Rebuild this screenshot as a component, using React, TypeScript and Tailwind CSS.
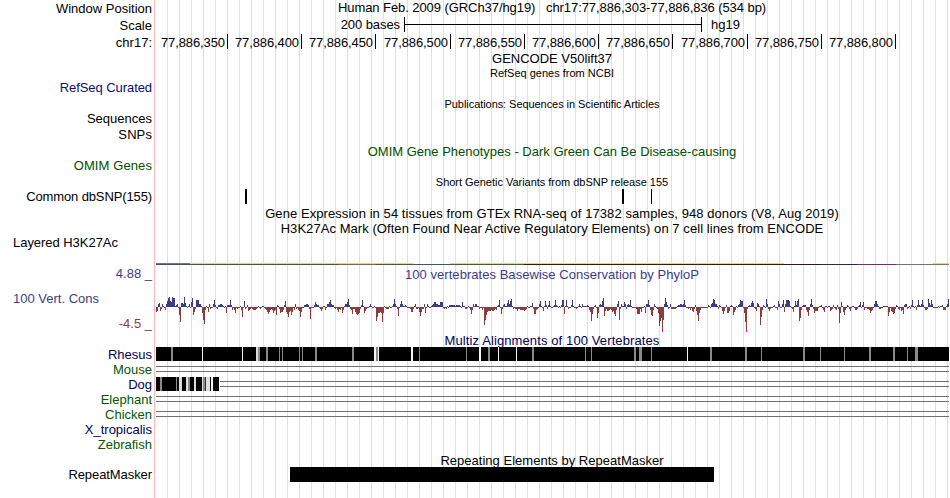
import React from "react";

type Run = [number, ...number[]];

// Runs of signed conservation scores: first value is the start column, the rest are scores.
const blockA: Run[] = [
  [6, -5, -4, 3, 4, -4, -2, 3, 1, -1, -3, 3, 6, 9, 10, 6, 5, 10, 9, 9, 1, 2, 3, -1, -8, -15, 4, 4, 3, 10, 4, 1, -1, 1, 3, -1, 5, 9, -8, -5, -2, 7, 7, 7, 3, 3, 1, -6, -13, -17, -3, 1, -1, -5, 3, -2, -1, -1, 3, 7, 2, -1, -2, 2, 2, 3, 3, 2, 1, -1, 1, -6, 2, 2, 2, 7, 2, -3, -1, -3, -6, -1, -2, -1, -1, 1, -3, -10, -1, 6, -2, -1, 2, -4, -3, -2, -1, -2, -3, -3, -3, -2, -1, 1, -1, -2, -1, 1, 1, -1, -2, -3, -5, -7, -5, -3, -2, -3, -6, -4, -3, -8, 2, 1, -2, -6, -5, -5, -3, 2, 6, -5, -7, -10, -5, -4, -8, -5, -1, -3, 3, -2, -1, -3, -4, -10, -5, -1, -1, 2, 2, 3, 3, 2, -2, -12, -1],
  [164, 2, 5, 3, 2, 2, -1, -2, -4, -2, 1, 1, -3, -1, 3, 3, 5, 7, 3, 2, 2, -1, -2, -1, -3, -5, -2, -3, -1, -6, -3, 1, 3, 3, 5, 8, 2],
];
const blockB: Run[] = [
  [0, -2, -3, -7, -2, -2, -5, -7, -8, -7, -6, -2, 2, 7, 1, -6, -4, -2, -1, -1, 1, 3, 1, -1, -1, 1, -1, -14, -10, -6, -6, -5, -6, -15, -6, 1, -1, -2, -2, -2, 1, -1, -1, 1, 3, 8, 3, 1, -2, -9, -1, 3, 6, 3, 1, 1, 2, 1, -1, -1, -1, -2, -5, -5, -2, 1, 3, -2, -2, -1, -5, -9, -5, -2, -2, 3, -6, -1, 3, 1, -1, -1, 1, 2, 3, 5, 5, 3, 3, 2, 2, 5, 5, 5, -1, -2, -1, -2, 1, -1, 2, 2, 2, 2, 2, 2, 1, 2, 2, 2, 2, 1, -1, 5, 1, 1, -2, -2, -1, 1, -1, -3, -7, -3, 3, 1, 3, 3, 1, 1, -2, -1, -1, -3],
  [134, -18, -13, -8, -5, -4, -4, -4, -3, -4, -4, -3, -2, -3, 1, 2, 7, -1, -7, -2, 2, 3, 1, 1, 4, 7, 3, 6, 8, 1, -2, -1, -2, -2, -4, -2, -2, -3, -3, -3, -3, -4, -3, -2, 1, -1, -1, 1, 1, 4, -2, -7, -7, -3, -2, -1, 3, 6, 1, -1, -4, 1, 6, 2, -2, 2, 6],
];
const blockC: Run[] = [
  [0, 1, -1, -1, 1, 2, 7, 2, 1, -1, 1, -1, 2, 7, 7, -7, 1, 7, 1, -2, -1, -1, 2, 7, 1, -1, -1, -2, -1, 1, 3, 1, -1, 3, 1, 1, 1, 1, 2, 1, -3, -5, -14, -7, -2, 1, 2, -1, -11, -6, 2, 3, 2, 6, 9, -9, -4, -2, -4, -4, -3, -2, -3, -5, -4, -7, -9, -3, 3, 6, -13, -2, 3, 1, 1, 5, 3, -2, 2, 3, 2, 7, 1, -1, -1, -1, -1, -2, -7, -7, -7, -2, -5, -1, -1, 1, -6, 3, 3, 7, 2, -3, -8, -9, -3, 3, 1, -1, -2, -6, -19, -14, -11, -24, -13, 3, 9, 5, 2, -2, -1, 3, -2, -2, -2, -2, -2, -1, 1, 2, 2, 3, 3, 2, 3, 7, 2, -1, -1, -2, -1, -3, -1, -4, -5, -2, 2, -4, -8, -14, -6, -3, -1],
  [158, 2, 1, -1, 3, 4, 8, 7, 3, 3, 1, -2, 2, 1, -1, -4, -7, -4, -1, 2, -6, -6, -4, 1, 2, 1, -8, -5, -3, 1, -1, 2, 3, 7, 6, 6],
  [194, -6, -15, -24, -2, 1, 2],
];
const blockD: Run[] = [
  [0, 1, 4, 6, 4, -1, -2, -4, 4, 3, 1, -18, -10, -3, 2, 1, -1, 8, 3, -2, -4, -2, -1, -1, 1, 2, -1, -1, -3, 6, 3, -1, -1, 3, 7, -5, 3, 7, 7, 7, 6, 1, -1, -2, -5, 1, 6, 2, 6, 8, -14, -11, -3, 1, 2, 2, 2, -3, -5, -9, -3, 3, 8, 2, -2, -6, -4, -4, -4, -1, 1, 1, 2, -1, -3, -5, 1, 1, -1, 1, 1, -4, -3, -2, 2, -1, -2, -3, 2, -2, -16, -6, 5, 1, -5, -8, -3, -1, 2, 1, -2, -4, -1, 1, 1, -1, -3, -3, -2, 1, 2, 5, -1, 2, 5, -3, -1, -1, -2, -2, -3, -6, -4, -3, -1, 3, 6, 6, 3, 1, -2, -2, -1, -1, 1, 1, 1, 1, 1, -9, -5, -1, -4, -5, -7, -6, -2, 2, 1, -2, -3, -1, -4, -3, -7, 2, 3, 3, -2, -1, 1, -2, 2, 7, 1, -1, 1, -3, 2, 7, 2, 1, 3, 7, 2, -1, -3, -3, -2, 8, 4, 2, 7, 3, -1],
  [188, 1, -1, 1, 1, 2, -3, -3, -3, 1, 3, 8],
];

const scores: number[] = new Array(793).fill(-1);
[blockA, blockB, blockC, blockD].forEach((runs, b) =>
  runs.forEach(([start, ...values]) =>
    values.forEach((v, i) => {
      const col = b * 200 + start + i - 6;
      if (col < 793) scores[col] = v;
    }),
  ),
);

function bars(positive: boolean) {
  return scores
    .map((v, x) => {
      if (v > 0 !== positive) return "";
      return v > 0 ? `M${x} ${17 - v}h1v${v}h-1z` : `M${x} 17h1v${-v}h-1z`;
    })
    .join("");
}

function Conservation() {
  return (
    <svg className="ml-px mt-2 block shrink-0" width="793" height="43" shapeRendering="crispEdges">
      <path d={bars(true)} fill="#3c3c8c" />
      <path d={bars(false)} fill="#8c3c3c" />
      <path d="M506 40h1v2h-1zM590 40h1v2h-1z" fill="#ff00ff" />
    </svg>
  );
}

type Gap = [number, number, string];
const G = "#8a8a8a";
const W = "#f4f4f4";
const L = "#dedede";

const rhesus: Gap[] = [
  [171, 2, G], [202, 1, W], [242, 1, W], [256, 2, L], [258, 2, G], [266, 2, G], [279, 1, G], [282, 1, G],
  [299, 1, G], [302, 1, G], [315, 2, G], [352, 2, G], [374, 2, W], [376, 2, G], [378, 1, W], [411, 2, W],
  [419, 1, G], [466, 1, G], [479, 2, W], [488, 2, G], [498, 1, W], [516, 1, W], [532, 2, G], [585, 1, G],
  [591, 1, G], [634, 2, G], [639, 3, G], [651, 1, G], [687, 1, W], [710, 2, G], [745, 2, G], [761, 1, G],
  [803, 2, G], [820, 1, G], [844, 1, G], [869, 2, G], [893, 2, G], [907, 1, G], [915, 3, G],
];
const dog: Gap[] = [
  [160, 2, G], [176, 1, G], [179, 3, L], [186, 2, L], [188, 2, G], [194, 2, L], [202, 1, L], [203, 2, G],
  [205, 1, "#333333"], [206, 4, L], [211, 2, W],
];

function Alignment({ gaps, width }: { gaps: Gap[]; width: number }) {
  return (
    <svg className="block shrink-0" width={width} height="14" shapeRendering="crispEdges">
      <rect width={width} height="14" fill="#000" />
      {gaps.map(([x, w, c]) => (
        <rect key={x} x={x - 156} width={w} height="14" fill={c} />
      ))}
    </svg>
  );
}

const Unaligned = () => <div className="h-1.5 flex-1 border-y border-[#707070]" />;

const labels: [string, string][] = [
  ["Window Position", "mt-px"],
  ["Scale", "mt-0.5"],
  ["chr17:", "mt-0.5"],
  ["RefSeq Curated", "mt-[30px] text-[#0c0c78] tracking-[-0.07px]"],
  ["Sequences", "mt-4"],
  ["SNPs", "mt-px tracking-[0.1px]"],
  ["OMIM Genes", "mt-4 text-[#005000] tracking-[0.1px]"],
  ["Common dbSNP(155)", "mt-4 tracking-[-0.12px]"],
  ["Layered H3K27Ac", "mt-[31px] self-start pl-[13px] tracking-[-0.04px]"],
  ["4.88 _", "mt-4 text-[#3c3c8c]"],
  ["100 Vert. Cons", "mt-2.5 self-start pl-[13px] text-[#3c3c8c]"],
  ["-4.5 _", "mt-2.5 text-[#8c3c3c]"],
  ["Rhesus", "mt-4 text-[#00005a]"],
  ["Mouse", "text-[#005a00]"],
  ["Dog", "text-[#00005a]"],
  ["Elephant", "text-[#005a00]"],
  ["Chicken", "text-[#005a00]"],
  ["X_tropicalis", "text-[#00005a]"],
  ["Zebrafish", "text-[#005a00]"],
  ["RepeatMasker", "mt-[15px] tracking-[-0.08px]"],
];

const ruler: [string, string][] = [
  ["77,886,350", "w-[73px]"],
  ["77,886,400", "w-[74px]"],
  ["77,886,450", "w-[74px]"],
  ["77,886,500", "w-[75px]"],
  ["77,886,550", "w-[74px]"],
  ["77,886,600", "w-[74px]"],
  ["77,886,650", "w-[74px]"],
  ["77,886,700", "w-[75px]"],
  ["77,886,750", "w-[74px]"],
  ["77,886,800", "w-[74px]"],
];

function Title({ className = "", children }: { className?: string; children: React.ReactNode }) {
  return <div className={`h-[15px] shrink-0 whitespace-pre text-center ${className}`}>{children}</div>;
}

export default function App() {
  return (
    <div className="flex h-[498px] w-[950px] overflow-hidden bg-white font-['Liberation_Sans',Arial,sans-serif] text-[13px] leading-[15px] text-black">
      <aside className="flex w-[154px] shrink-0 flex-col items-end whitespace-pre">
        {labels.map(([text, cls]) => (
          <div key={text} className={`h-[15px] shrink-0 pr-0.5 ${cls}`}>
            {text}
          </div>
        ))}
      </aside>
      <div className="w-px shrink-0 bg-[#ffb4b4]" />
      <main className="flex w-[794px] shrink-0 flex-col bg-[linear-gradient(to_right,#fff_1px,transparent_1px),repeating-linear-gradient(to_right,#dcdcf5_0px,#dcdcf5_1px,transparent_1px,transparent_12px)]">
        <Title className="tracking-[-0.07px]">Human Feb. 2009 (GRCh37/hg19)   chr17:77,886,303-77,886,836 (534 bp)</Title>
        <div className="mt-0.5 flex h-[17px] shrink-0">
          <div className="w-[249px] pr-1 text-right tracking-[-0.08px]">200 bases</div>
          <div className="flex h-[15px] w-[298px] items-center border-x border-black">
            <div className="h-px w-full bg-black" />
          </div>
          <div className="pl-[9px]">hg19</div>
        </div>
        <div className="flex h-[17px] shrink-0">
          {ruler.map(([text, cls]) => (
            <div key={text} className={`h-[15px] border-r border-black pr-0.5 pt-px text-right tracking-[-0.1px] ${cls}`}>
              {text}
            </div>
          ))}
        </div>
        <Title>GENCODE V50lift37</Title>
        <Title className="text-[11px]">RefSeq genes from NCBI</Title>
        <Title className="mt-4 text-[11px] tracking-[-0.06px]">Publications: Sequences in Scientific Articles</Title>
        <Title className="mt-8 text-[#005000]">OMIM Gene Phenotypes - Dark Green Can Be Disease-causing</Title>
        <Title className="mt-4 text-[11px] tracking-[-0.02px]">Short Genetic Variants from dbSNP release 155</Title>
        <div className="-mt-px flex h-[15px] shrink-0">
          <div className="ml-[90px] w-0.5 bg-black" />
          <div className="ml-[375px] w-0.5 bg-black" />
          <div className="ml-[27px] w-px bg-black" />
        </div>
        <Title className="mt-0.5 tracking-[0.07px]">Gene Expression in 54 tissues from GTEx RNA-seq of 17382 samples, 948 donors (V8, Aug 2019)</Title>
        <Title className="tracking-[0.06px]">H3K27Ac Mark (Often Found Near Active Regulatory Elements) on 7 cell lines from ENCODE</Title>
        <div className="ml-px mt-[27px] flex h-px shrink-0">
          <div className="w-[34px] bg-[#7c6c88]" />
          <div className="w-[223px] bg-[#f8cc78]" />
          <div className="ml-[37px] w-[334px] bg-[#f8cc78]" />
          <div className="ml-[149px] flex-1 bg-[#f8cc78]" />
        </div>
        <div className="ml-px flex h-px shrink-0">
          <div className="w-[183px] bg-[#3f5070]" />
          <div className="w-[37px] bg-[#7a6470]" />
          <div className="w-[148px] bg-[#405860]" />
          <div className="w-[297px] bg-[#301828]" />
          <div className="w-[37px] bg-[#2c2c48]" />
          <div className="w-[38px] bg-[#7c2c60]" />
          <div className="flex-1 bg-[#787078]" />
        </div>
        <Title className="mt-0.5 text-[#3c3c8c] tracking-[0.04px]">100 vertebrates Basewise Conservation by PhyloP</Title>
        <Conservation />
        <div className="h-[14px] shrink-0 text-center text-[#00005a] tracking-[0.11px]">Multiz Alignments of 100 Vertebrates</div>
        <div className="ml-px flex h-[15px] shrink-0">
          <Alignment gaps={rhesus} width={793} />
        </div>
        <div className="ml-px flex h-[15px] shrink-0 items-start pt-1">
          <Unaligned />
        </div>
        <div className="ml-px flex h-[15px] shrink-0 items-center pb-px">
          <Alignment gaps={dog} width={63} />
          <div className="ml-px flex flex-1">
            <Unaligned />
          </div>
        </div>
        <div className="ml-px flex h-[15px] shrink-0 items-start pt-1">
          <Unaligned />
        </div>
        <div className="ml-px flex h-[15px] shrink-0 items-start pt-1">
          <Unaligned />
        </div>
        <Title className="mt-[31px] tracking-[0.02px]">Repeating Elements by RepeatMasker</Title>
        <div className="-mt-px ml-[135px] h-[15px] w-[424px] shrink-0 bg-black" />
      </main>
    </div>
  );
}
